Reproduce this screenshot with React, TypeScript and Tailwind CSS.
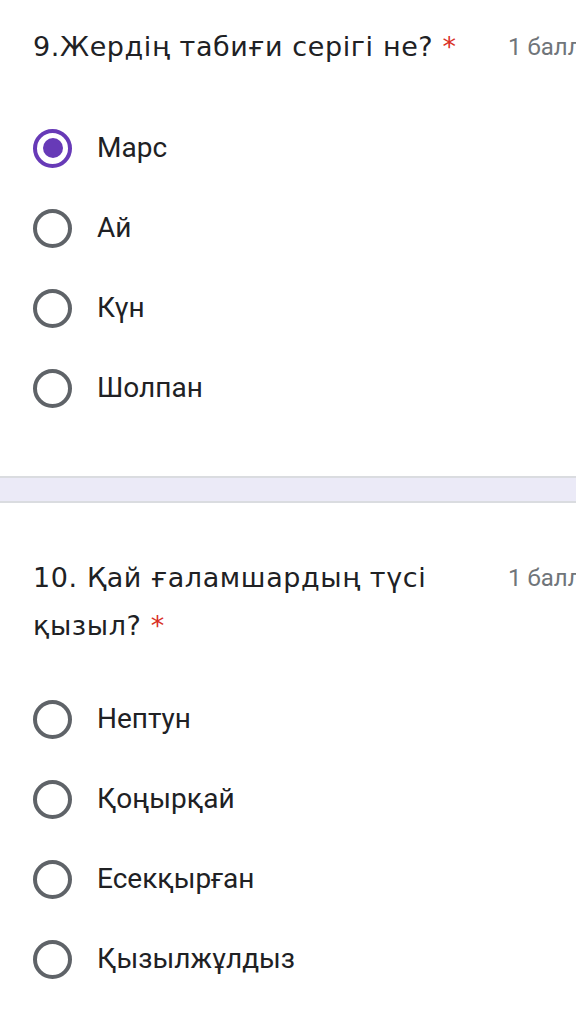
const QUESTIONS = [
  {
    title: "9.Жердің табиғи серігі не?",
    points: "1 балл",
    options: ["Марс", "Ай", "Күн", "Шолпан"],
    selected: 0,
  },
  {
    title: "10. Қай ғаламшардың түсі қызыл?",
    points: "1 балл",
    options: ["Нептун", "Қоңырқай", "Есекқырған", "Қызылжұлдыз"],
    selected: -1,
  },
];

function Radio({ checked }: { checked: boolean }) {
  if (checked) {
    return (
      <span className="flex h-[39px] w-[39px] shrink-0 items-center justify-center rounded-full border-[4px] border-[#673ab7]">
        <span className="h-[20px] w-[20px] rounded-full bg-[#673ab7]" />
      </span>
    );
  }
  return <span className="h-[39px] w-[39px] shrink-0 rounded-full border-[4px] border-[#5f6368]" />;
}

function Question({ q, first }: { q: (typeof QUESTIONS)[number]; first: boolean }) {
  return (
    <section className={first ? "pt-[23px] pb-[48px]" : "pt-[51px] pb-[12px]"}>
      <div className="flex pl-[33px]">
        <h2 className="w-[443px] shrink-0 font-['DejaVu_Sans',sans-serif] text-[27px] leading-[48px] tracking-[0.6px] text-[#202124]">
          {q.title} <span className="text-[#d93025]">*</span>
        </h2>
        <span className="ml-[32px] shrink-0 whitespace-nowrap text-[24px] leading-[48px] text-[#70757a]">
          {q.points}
        </span>
      </div>
      <ul className={first ? "mt-[37px]" : "mt-[29px]"}>
        {q.options.map((opt, i) => (
          <li key={opt} className="flex h-[80px] items-center gap-[25px] pl-[33px]">
            <Radio checked={i === q.selected} />
            <span className="text-[28px] text-[#202124]">{opt}</span>
          </li>
        ))}
      </ul>
    </section>
  );
}

export default function App() {
  return (
    <div className="w-[576px] overflow-hidden bg-white font-['Roboto',sans-serif]">
      <Question q={QUESTIONS[0]} first />
      <div className="h-[27px] border-y-2 border-[#dadce0] bg-[#ebeaf7]" />
      <Question q={QUESTIONS[1]} first={false} />
    </div>
  );
}
